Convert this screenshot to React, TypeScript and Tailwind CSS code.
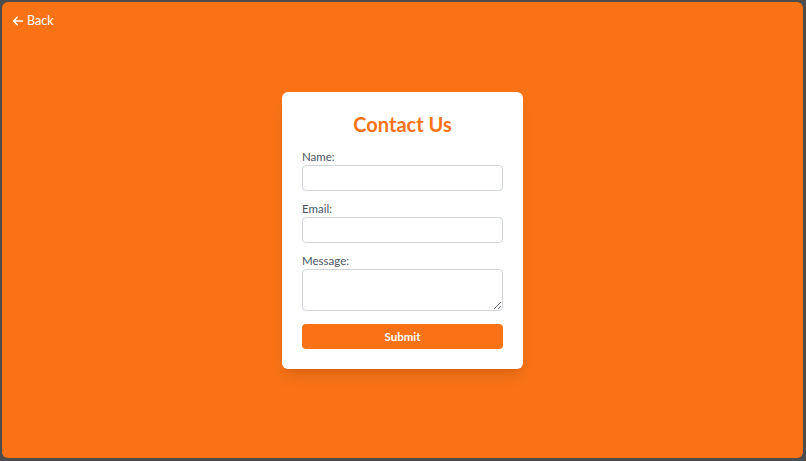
import React from "react";

export default function App() {
  return (
    <div className="h-[461px] w-[806px] bg-[#4d4d4d] pt-[2px] pl-[2px] pr-[3px] pb-[3px]" style={{ fontFamily: "Lato, 'Noto Sans', sans-serif" }}>
      <div className="h-full w-full rounded-md bg-[#f97316] flex flex-col">
        <div className="pt-[11px] pl-[10px] h-[90px]">
          <button className="flex items-center gap-[3px] text-white text-[12.5px] leading-4">
            <svg width="12" height="12" viewBox="0 0 448 512" fill="currentColor">
              <path d="M9.4 233.4c-12.5 12.5-12.5 32.8 0 45.3l160 160c12.5 12.5 32.8 12.5 45.3 0s12.5-32.8 0-45.3L109.2 288H416c17.7 0 32-14.3 32-32s-14.3-32-32-32H109.3L214.6 118.6c12.5-12.5 12.5-32.8 0-45.3s-32.8-12.5-45.3 0l-160 160z" />
            </svg>
            <span>Back</span>
          </button>
        </div>
        <div className="flex justify-center">
          <div className="w-[241px] bg-white rounded-md shadow-lg px-[20px] pt-[18px] pb-[20px]">
            <h1 className="text-center text-[20px] leading-7 font-bold text-[#f97316] mb-[11px]">Contact Us</h1>
            <form onSubmit={(e) => e.preventDefault()}>
              <label className="block text-[11.5px] leading-4 text-[#4b5563]">Name:</label>
              <input className="block w-full h-[26px] border border-[#d1d5db] rounded-[4px] mb-[10px] px-2 text-sm" />
              <label className="block text-[11.5px] leading-4 text-[#4b5563]">Email:</label>
              <input className="block w-full h-[26px] border border-[#d1d5db] rounded-[4px] mb-[10px] px-2 text-sm" />
              <label className="block text-[11.5px] leading-4 text-[#4b5563]">Message:</label>
              <textarea className="block w-full h-[42px] border border-[#d1d5db] rounded-[4px] mb-[13px] px-2 text-sm" />
              <button type="submit" className="block w-full h-[25px] bg-[#f97316] rounded-[4px] text-white text-[11.5px] font-bold">Submit</button>
            </form>
          </div>
        </div>
      </div>
    </div>
  );
}
